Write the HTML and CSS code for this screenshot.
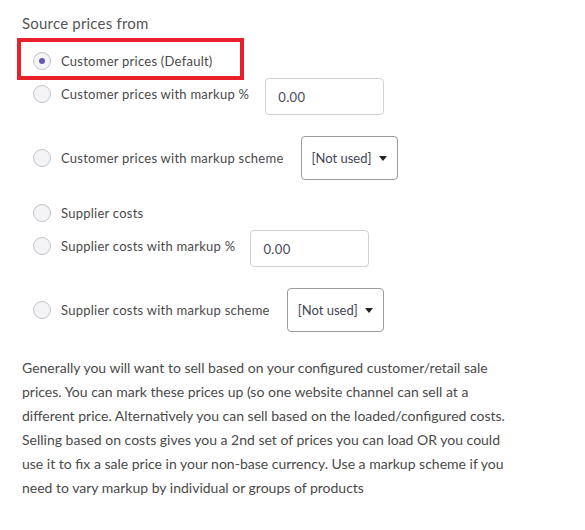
FILE: index.html
```html
<!DOCTYPE html>
<html>
<head>
<meta charset="utf-8">
<link rel="stylesheet" href="styles.css">
</head>
<body>
<div class="panel">
  <div class="heading">Source prices from</div>
  <div class="options">
    <label class="row row-plain row-first highlighted">
      <span class="radio checked"></span>
      <span class="label">Customer prices (Default)</span>
    </label>
    <label class="row row-input">
      <span class="radio"></span>
      <span class="label">Customer prices with markup %</span>
      <span class="textbox tb-1">0.00</span>
    </label>
    <label class="row row-select">
      <span class="radio"></span>
      <span class="label">Customer prices with markup scheme</span>
      <span class="select sel-1">[Not used]<span class="caret"></span></span>
    </label>
    <label class="row row-plain">
      <span class="radio"></span>
      <span class="label">Supplier costs</span>
    </label>
    <label class="row row-input">
      <span class="radio"></span>
      <span class="label">Supplier costs with markup %</span>
      <span class="textbox tb-2">0.00</span>
    </label>
    <label class="row row-select row-last">
      <span class="radio"></span>
      <span class="label">Supplier costs with markup scheme</span>
      <span class="select sel-2">[Not used]<span class="caret"></span></span>
    </label>
  </div>
  <p class="help">Generally you will want to sell based on your configured customer/retail sale prices. You can mark these prices up (so one website channel can sell at a different price. Alternatively you can sell based on the loaded/configured costs. Selling based on costs gives you a 2nd set of prices you can load OR you could use it to fix a sale price in your non-base currency. Use a markup scheme if you need to vary markup by individual or groups of products</p>
</div>
</body>
</html>
```
FILE: styles.css
```css
html, body {
  margin: 0;
  padding: 0;
  background: #ffffff;
}
body {
  font-family: Lato, "Noto Sans", "DejaVu Sans", sans-serif;
  color: #4a4a4a;
}
.panel {
  padding: 12px 0 0 22px;
  width: 496px;
}
.heading {
  font-size: 15px;
  line-height: 22px;
  color: #555555;
  letter-spacing: 0.2px;
}
.options {
  display: flex;
  flex-direction: column;
  margin-top: 16px;
}
.row {
  display: flex;
  align-items: center;
  padding-left: 11px;
  position: relative;
}
.row-plain {
  height: 22px;
  margin-bottom: 1px;
}
.row-input {
  height: 42px;
  margin-bottom: 21px;
}
.row-select {
  margin-bottom: 22px;
}
.row-last {
  margin-bottom: 0;
}
.highlighted::after {
  content: "";
  position: absolute;
  left: -5px;
  top: -12px;
  width: 219px;
  height: 34px;
  border: 4px solid #e8202a;
  pointer-events: none;
}
.radio {
  width: 16px;
  height: 16px;
  border: 1px solid #c4c4c8;
  border-radius: 50%;
  background: #f4f4f7;
  display: flex;
  align-items: center;
  justify-content: center;
  flex: none;
}
.radio.checked::before {
  content: "";
  width: 6px;
  height: 6px;
  border-radius: 50%;
  background: #6a56b8;
}
.label {
  font-size: 13px;
  line-height: 18px;
  margin-left: 10px;
  color: #4a4a4a;
  letter-spacing: 0.25px;
}
.textbox {
  box-sizing: border-box;
  height: 37px;
  width: 119px;
  margin-top: 5px;
  border: 1px solid #d2d2d6;
  border-radius: 4px;
  display: flex;
  align-items: center;
  padding-left: 12px;
  font-size: 13px;
  color: #4a4a5a;
  letter-spacing: 0.4px;
}
.tb-1 {
  margin-left: 16px;
}
.tb-2 {
  margin-left: 15px;
}
.select {
  box-sizing: border-box;
  height: 44px;
  width: 97px;
  border: 1px solid #9a9aa0;
  border-radius: 4px;
  display: flex;
  align-items: center;
  justify-content: space-between;
  padding: 0 10px 0 10px;
  font-size: 13px;
  color: #444455;
}
.sel-1 {
  margin-left: 17px;
}
.sel-2 {
  margin-left: 17px;
}
.caret {
  width: 0;
  height: 0;
  border-left: 4px solid transparent;
  border-right: 4px solid transparent;
  border-top: 5px solid #222222;
}
.help {
  margin: 24px 0 0 0;
  font-size: 14px;
  line-height: 24px;
  color: #4a4a4a;
}
```
